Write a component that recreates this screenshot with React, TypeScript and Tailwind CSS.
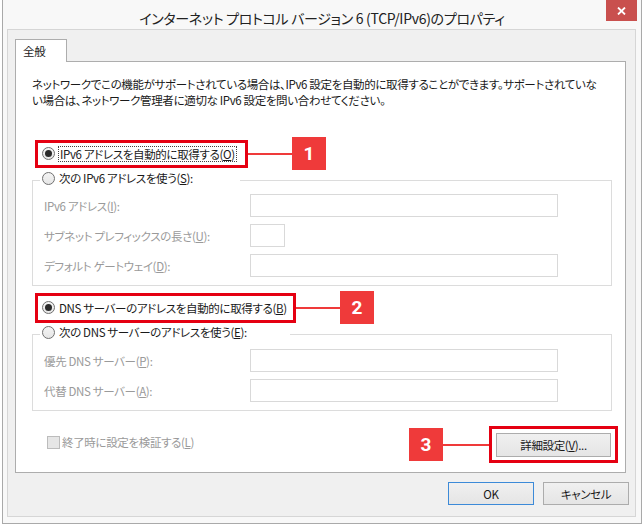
import React from "react";

const jp = "font-['Noto_Sans_CJK_JP',sans-serif] [font-feature-settings:'palt']";

function Radio({ checked }: { checked?: boolean }) {
  return (
    <span className="flex h-[13px] w-[13px] shrink-0 items-center justify-center rounded-full border border-[#707070] bg-gradient-to-b from-[#f4f4f4] to-[#e6e6e6]">
      {checked && <span className="h-[7px] w-[7px] rounded-full bg-[#2a2a2a]" />}
    </span>
  );
}

function Badge({ n }: { n: string }) {
  return (
    <div className="flex h-[33px] w-[34px] shrink-0 items-center justify-center bg-[#ef3a3a] font-['Roboto',sans-serif] text-[19px] font-bold tracking-normal text-white">
      {n}
    </div>
  );
}

function Field({ label, small }: { label: React.ReactNode; small?: boolean }) {
  return (
    <div className="flex items-center">
      <div className="w-[206px] whitespace-nowrap text-[#9a9a9a]">{label}</div>
      <div
        className={`h-[23px] border border-[#d9d9d9] bg-white ${small ? "w-[35px]" : "w-[308px]"}`}
      />
    </div>
  );
}

function WinButton({ children, primary, className = "" }: { children: React.ReactNode; primary?: boolean; className?: string }) {
  return (
    <div
      className={`flex items-center justify-center border bg-gradient-to-b from-[#f0f0f0] to-[#e5e5e5] text-[#1a1a1a] ${
        primary ? "border-[#3c8ad8]" : "border-[#acacac]"
      } ${className}`}
    >
      {children}
    </div>
  );
}

export default function App() {
  return (
    <div className={`h-[525px] w-[644px] bg-white px-[2px] pb-[1px] text-[11.5px] leading-[16px] tracking-[-0.35px] text-[#1a1a1a] ${jp}`}>
      <div className="flex h-full flex-col border-x border-b border-[#a9a9a9] bg-[#f8f8f8]">
        {/* title bar */}
        <div className="grid h-[29px] grid-cols-[1fr_auto_1fr]">
          <div />
          <div className="whitespace-nowrap pt-[8px] text-[14px] leading-[20px] tracking-[-0.3px] text-[#222]">
            インターネット プロトコル バージョン 6 (TCP/IPv6)のプロパティ
          </div>
          <div className="flex justify-end pr-[4px]">
            <div className="flex h-[21px] w-[31px] items-center justify-center bg-[#c9504e]">
              <svg width="9" height="8" viewBox="0 0 9 8">
                <path d="M1 0.5 L8 7.5 M8 0.5 L1 7.5" stroke="white" strokeWidth="1.8" />
              </svg>
            </div>
          </div>
        </div>

        {/* client area */}
        <div className="ml-[4px] mr-[5px] mb-[6px] flex flex-1 flex-col border border-[#d6d6d6] bg-[#f0f0f0] pl-[7px] pr-[6px] pt-[9px] pb-[9px]">
          {/* tab */}
          <div className="relative z-10 -mb-px flex h-[23px] w-[52px] items-center border-x border-t border-[#adadad] bg-white pl-[7px]">
            全般
          </div>

          {/* panel */}
          <div className="flex w-[611px] flex-col border border-[#adadad] bg-white pl-[16px] pr-[13px] pt-[14px] pb-[9px]">
            <p className="whitespace-nowrap">
              ネットワークでこの機能がサポートされている場合は、IPv6 設定を自動的に取得することができます。サポートされていな
              <br />
              い場合は、ネットワーク管理者に適切な IPv6 設定を問い合わせてください。
            </p>

            {/* row 1 */}
            <div className="ml-[3px] mt-[29px] flex items-center">
              <div className="flex h-[28px] w-[213px] shrink-0 items-center gap-[3px] border-[3px] border-[#e50012] pl-[4px]">
                <Radio checked />
                <span className="whitespace-nowrap border border-dotted border-[#444] px-[1px] leading-[14px]">
                  IPv6 アドレスを自動的に取得する(<u>O</u>)
                </span>
              </div>
              <div className="h-[2px] w-[44px] bg-[#ef3a3a]" />
              <Badge n="1" />
            </div>

            {/* group 1 */}
            <fieldset className="w-[580px] border border-[#dcdcdc] pl-[7px] pt-[4px] pb-[8px]">
              <legend className="h-[20px] w-[200px] pl-[2px]">
                <div className="flex h-[16px] items-center gap-[4px] whitespace-nowrap">
                  <Radio />
                  <span>
                    次の IPv6 アドレスを使う(<u>S</u>):
                  </span>
                </div>
              </legend>
              <div className="ml-[4px] flex flex-col gap-[7px]">
                <Field label={<>IPv6 アドレス(<u>I</u>):</>} />
                <Field label={<>サブネット プレフィックスの長さ(<u>U</u>):</>} small />
                <Field label={<>デフォルト ゲートウェイ(<u>D</u>):</>} />
              </div>
            </fieldset>

            {/* row 2 */}
            <div className="ml-[3px] mt-[5px] flex items-center">
              <div className="flex h-[30px] w-[261px] shrink-0 items-center gap-[4px] border-[3px] border-[#e50012] pl-[4px]">
                <Radio checked />
                <span className="whitespace-nowrap">
                  DNS サーバーのアドレスを自動的に取得する(<u>B</u>)
                </span>
              </div>
              <div className="h-[2px] w-[44px] bg-[#ef3a3a]" />
              <Badge n="2" />
            </div>

            {/* group 2 */}
            <fieldset className="w-[580px] border border-[#dcdcdc] pl-[7px] pt-[5px] pb-[8px]">
              <legend className="h-[20px] w-[250px] pl-[2px]">
                <div className="flex h-[16px] items-center gap-[4px] whitespace-nowrap">
                  <Radio />
                  <span>
                    次の DNS サーバーのアドレスを使う(<u>E</u>):
                  </span>
                </div>
              </legend>
              <div className="ml-[4px] flex flex-col gap-[7px]">
                <Field label={<>優先 DNS サーバー(<u>P</u>):</>} />
                <Field label={<>代替 DNS サーバー(<u>A</u>):</>} />
              </div>
            </fieldset>

            {/* bottom row */}
            <div className="-mr-[6px] mt-[15px] flex items-start justify-between">
              <div className="ml-[15px] mt-[8px] flex items-center gap-[2px] text-[#9a9a9a]">
                <span className="h-[13px] w-[13px] border border-[#bcbcbc] bg-[#e6e6e6]" />
                <span className="whitespace-nowrap">
                  終了時に設定を検証する(<u>L</u>)
                </span>
              </div>
              <div className="flex items-center">
                <Badge n="3" />
                <div className="h-[2px] w-[46px] bg-[#ef3a3a]" />
                <div className="flex h-[37px] w-[129px] items-center border-[3px] border-[#e50012] pl-[4px]">
                  <WinButton className="h-[24px] w-[115px]">
                    詳細設定(<u>V</u>)...
                  </WinButton>
                </div>
              </div>
            </div>
          </div>

          {/* dialog buttons */}
          <div className="mt-[9px] flex justify-end gap-[9px]">
            <WinButton primary className="h-[23px] w-[86px]">
              OK
            </WinButton>
            <WinButton className="h-[23px] w-[86px]">キャンセル</WinButton>
          </div>
        </div>
      </div>
    </div>
  );
}
